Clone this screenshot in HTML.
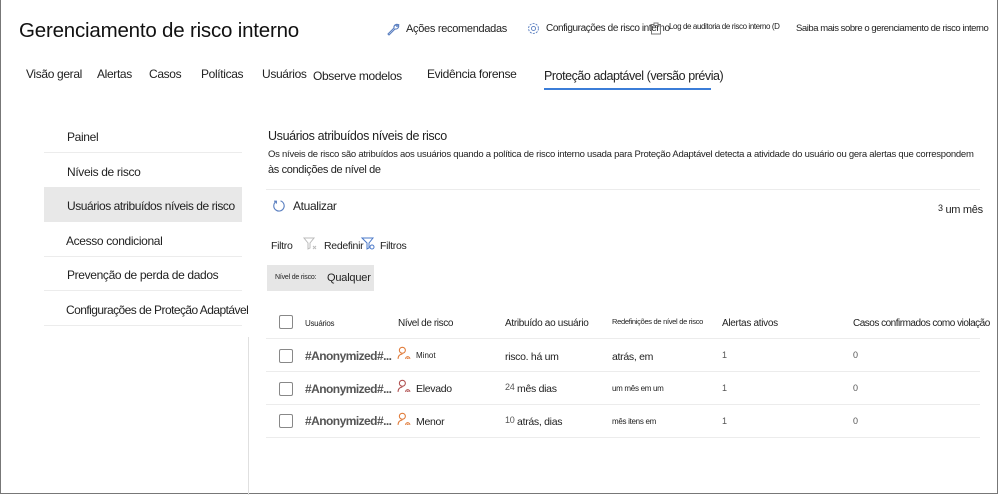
<!DOCTYPE html>
<html><head><meta charset="utf-8"><style>
*{margin:0;padding:0;box-sizing:border-box}
body{width:1000px;height:495px;background:#fff;font-family:"Liberation Sans",sans-serif;color:#222;position:relative;overflow:hidden}
.a{position:absolute;white-space:nowrap}
svg.a{overflow:visible}
.frame{position:absolute;left:0;top:0;width:998px;height:494px;border:1px solid #777;border-top:none}
.s{font-size:12px;letter-spacing:-0.35px}
.sep{position:absolute;height:1px;background:#ececec}
.cb{position:absolute;width:14px;height:14px;border:1px solid #888;border-radius:2px;background:#fff}
.g{color:#555}
.an{font-size:12px;font-weight:bold;color:#555;letter-spacing:-0.55px}
</style></head><body>
<div class="frame"></div>
<div class="a" style="left:19px;top:19px;font-size:20.5px;color:#111;letter-spacing:-0.2px">Gerenciamento de risco interno</div>

<svg class="a" style="left:386px;top:22px" width="14" height="14" viewBox="0 0 14 14"><path d="M12 2.5a3 3 0 0 0-4 3.5L2 12l1 1 6-6a3 3 0 0 0 3.5-4L11 4.5 9.5 3z" fill="none" stroke="#5a7fc0" stroke-width="1.1"/></svg>
<div class="a" style="left:406px;top:23px;font-size:11px;letter-spacing:-0.3px">Ações recomendadas</div>
<svg class="a" style="left:527px;top:22px" width="13" height="13" viewBox="0 0 14 14"><circle cx="7" cy="7" r="2.2" fill="none" stroke="#5a7fc0"/><circle cx="7" cy="7" r="5.3" fill="none" stroke="#5a7fc0" stroke-dasharray="2.2 1.2"/></svg>
<div class="a" style="left:546px;top:23px;font-size:10px;letter-spacing:-0.4px">Configurações de risco interno</div>
<svg class="a" style="left:650px;top:22px" width="12" height="13" viewBox="0 0 12 13"><rect x="1.5" y="2.5" width="9" height="9.5" fill="none" stroke="#777"/><rect x="4" y="1" width="4" height="2.5" fill="#fff" stroke="#777"/></svg>
<div class="a" style="left:669px;top:22px;font-size:8px;letter-spacing:-0.4px">Log de auditoria de risco interno (D</div>
<div class="a" style="left:796px;top:23px;font-size:9.5px;letter-spacing:-0.45px">Saiba mais sobre o gerenciamento de risco interno</div>

<div class="a s" style="left:26px;top:67px">Visão geral</div>
<div class="a s" style="left:97px;top:67px">Alertas</div>
<div class="a s" style="left:149px;top:67px">Casos</div>
<div class="a s" style="left:201px;top:67px">Políticas</div>
<div class="a s" style="left:262px;top:67px">Usuários</div>
<div class="a s" style="left:313px;top:69px">Observe modelos</div>
<div class="a s" style="left:427px;top:67px">Evidência forense</div>
<div class="a s" style="left:544px;top:69px;font-size:12.5px;letter-spacing:-0.45px">Proteção adaptável (versão prévia)</div>
<div class="a" style="left:544px;top:88px;width:167px;height:2px;background:#3b7dd8"></div>

<div class="a s" style="left:67px;top:130px">Painel</div>
<div class="sep" style="left:44px;top:152px;width:198px"></div>
<div class="a s" style="left:67px;top:165px">Níveis de risco</div>
<div class="a" style="left:44px;top:187px;width:198px;height:35px;background:#e8e8e8"></div>
<div class="a s" style="left:67px;top:199px;letter-spacing:-0.45px">Usuários atribuídos níveis de risco</div>
<div class="a s" style="left:66px;top:234px">Acesso condicional</div>
<div class="sep" style="left:44px;top:256px;width:198px"></div>
<div class="a s" style="left:67px;top:268px">Prevenção de perda de dados</div>
<div class="sep" style="left:44px;top:290px;width:198px"></div>
<div class="a s" style="left:66px;top:303px;letter-spacing:-0.55px">Configurações de Proteção Adaptável</div>
<div class="sep" style="left:44px;top:325px;width:198px"></div>
<div class="a" style="left:248px;top:337px;width:1px;height:158px;background:#e0e0e0"></div>

<div class="a s" style="left:268px;top:129px;font-size:12.5px">Usuários atribuídos níveis de risco</div>
<div class="a" style="left:268px;top:149px;font-size:9.5px;letter-spacing:-0.25px">Os níveis de risco são atribuídos aos usuários quando a política de risco interno usada para Proteção Adaptável detecta a atividade do usuário ou gera alertas que correspondem</div>
<div class="a s" style="left:268px;top:164px;font-size:11px">às condições de nível de</div>
<div class="sep" style="left:266px;top:189px;width:714px"></div>
<svg class="a" style="left:272px;top:199px" width="14" height="14" viewBox="0 0 14 14"><path d="M4 2.6A5.2 5.2 0 1 0 8.5 1.9" fill="none" stroke="#5a7fc0" stroke-width="1.1"/><path d="M2 2.2h2.4v2.4" fill="none" stroke="#5a7fc0" stroke-width="1.1"/></svg>
<div class="a s" style="left:293px;top:199px">Atualizar</div>
<div class="a" style="left:938px;top:203px;font-size:11px;letter-spacing:-0.3px"><span style="font-size:9px;vertical-align:2px">3</span> um mês</div>

<div class="a" style="left:271px;top:240px;font-size:10.5px;letter-spacing:-0.3px">Filtro</div>
<svg class="a" style="left:303px;top:237px" width="14" height="13" viewBox="0 0 14 13"><path d="M1 1h10L7 6v5L5 12V6z" fill="none" stroke="#bbb"/><path d="M10 9l3 3M13 9l-3 3" stroke="#bbb"/></svg>
<div class="a" style="left:324px;top:240px;font-size:10.5px;letter-spacing:-0.3px">Redefinir</div>
<svg class="a" style="left:361px;top:237px" width="14" height="13" viewBox="0 0 14 13"><path d="M1 1h11L8 6v5L6 12V6z" fill="none" stroke="#4a78c8"/><circle cx="11" cy="10" r="2" fill="none" stroke="#4a78c8"/></svg>
<div class="a" style="left:380px;top:240px;font-size:10.5px;letter-spacing:-0.3px">Filtros</div>
<div class="a" style="left:267px;top:265px;width:107px;height:26px;background:#e6e6e6"></div>
<div class="a" style="left:275px;top:274px;font-size:7px;letter-spacing:-0.2px">Nível de risco:</div>
<div class="a" style="left:327px;top:272px;font-size:11px;letter-spacing:-0.2px">Qualquer</div>

<div class="cb" style="left:279px;top:315px"></div>
<div class="a" style="left:305px;top:319px;font-size:8px;letter-spacing:-0.3px">Usuários</div>
<div class="a" style="left:398px;top:318px;font-size:10px;letter-spacing:-0.4px">Nível de risco</div>
<div class="a" style="left:505px;top:318px;font-size:10px;letter-spacing:-0.3px">Atribuído ao usuário</div>
<div class="a" style="left:612px;top:317px;font-size:7.5px;letter-spacing:-0.3px">Redefinições de nível de risco</div>
<div class="a" style="left:722px;top:318px;font-size:10px;letter-spacing:-0.3px">Alertas ativos</div>
<div class="a" style="left:853px;top:318px;font-size:10px;letter-spacing:-0.5px">Casos confirmados como violação</div>
<div class="sep" style="left:266px;top:338px;width:714px"></div>

<div class="cb" style="left:279px;top:349px"></div>
<div class="a an" style="left:305px;top:349px">#Anonymized#...</div>
<svg class="a" style="left:397px;top:346px" width="15" height="15" viewBox="0 0 14 14"><circle cx="5" cy="4" r="2.8" fill="none" stroke="#e07b39"/><path d="M1 12c0-3 2-4.5 4-4.5" fill="none" stroke="#e07b39"/><path d="M8 12a2 2 0 0 1 4 0M9.5 12a.5.5 0 0 1 1 0" fill="none" stroke="#e07b39"/></svg>
<div class="a" style="left:416px;top:351px;font-size:8px">Minot</div>
<div class="a" style="left:505px;top:351px;font-size:10.5px;letter-spacing:-0.3px">risco. há um</div>
<div class="a" style="left:612px;top:351px;font-size:10.5px;letter-spacing:-0.3px">atrás, em</div>
<div class="a g" style="left:722px;top:350px;font-size:9px">1</div>
<div class="a g" style="left:853px;top:350px;font-size:9px">0</div>
<div class="sep" style="left:266px;top:371px;width:714px"></div>

<div class="cb" style="left:279px;top:382px"></div>
<div class="a an" style="left:305px;top:382px">#Anonymized#...</div>
<svg class="a" style="left:397px;top:379px" width="15" height="15" viewBox="0 0 14 14"><circle cx="5" cy="4" r="2.8" fill="none" stroke="#b05050"/><path d="M1 12c0-3 2-4.5 4-4.5" fill="none" stroke="#b05050"/><path d="M8 12a2 2 0 0 1 4 0M9.5 12a.5.5 0 0 1 1 0" fill="none" stroke="#b05050"/></svg>
<div class="a" style="left:416px;top:383px;font-size:10.5px;letter-spacing:-0.3px">Elevado</div>
<div class="a" style="left:505px;top:382px;font-size:10.5px;letter-spacing:-0.3px"><span style="font-size:9px;color:#555;vertical-align:2px">24</span> mês dias</div>
<div class="a" style="left:612px;top:384px;font-size:8px;letter-spacing:-0.3px">um mês em um</div>
<div class="a g" style="left:722px;top:383px;font-size:9px">1</div>
<div class="a g" style="left:853px;top:383px;font-size:9px">0</div>
<div class="sep" style="left:266px;top:404px;width:714px"></div>

<div class="cb" style="left:279px;top:414px"></div>
<div class="a an" style="left:305px;top:414px">#Anonymized#...</div>
<svg class="a" style="left:397px;top:412px" width="15" height="15" viewBox="0 0 14 14"><circle cx="5" cy="4" r="2.8" fill="none" stroke="#e07b39"/><path d="M1 12c0-3 2-4.5 4-4.5" fill="none" stroke="#e07b39"/><path d="M8 12a2 2 0 0 1 4 0M9.5 12a.5.5 0 0 1 1 0" fill="none" stroke="#e07b39"/></svg>
<div class="a" style="left:416px;top:416px;font-size:10.5px;letter-spacing:-0.3px">Menor</div>
<div class="a" style="left:505px;top:415px;font-size:10.5px;letter-spacing:-0.3px"><span style="font-size:9px;color:#555;vertical-align:2px">10</span> atrás, dias</div>
<div class="a" style="left:612px;top:417px;font-size:8px;letter-spacing:-0.3px">mês itens em</div>
<div class="a g" style="left:722px;top:416px;font-size:9px">1</div>
<div class="a g" style="left:853px;top:416px;font-size:9px">0</div>
<div class="sep" style="left:266px;top:437px;width:714px"></div>
</body></html>
